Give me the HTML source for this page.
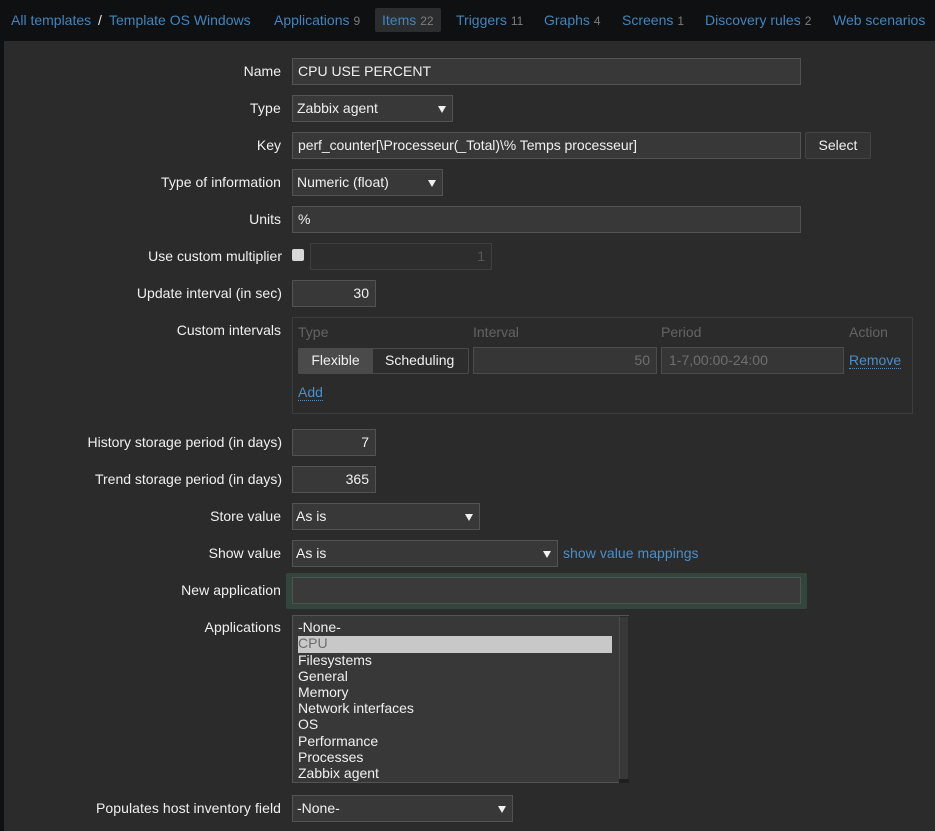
<!DOCTYPE html>
<html><head><meta charset="utf-8">
<style>
html,body{margin:0;padding:0;background:#0e1012;}
body{width:935px;height:831px;overflow:hidden;position:relative;font:14px/16px "Liberation Sans",Arial,sans-serif;color:#f0f0f0;}
.t{position:absolute;white-space:nowrap;}
.l{position:absolute;right:654px;white-space:nowrap;color:#f0f0f0;}
.x{right:653px;}
a{color:#4a8fca;text-decoration:none;}
.n{position:absolute;top:12px;white-space:nowrap;color:#4285bd;}
.n i{font-style:normal;font-size:12px;color:#7d7d7d;margin-left:4px;}
.b{position:absolute;box-sizing:border-box;background:#383838;border:1px solid #535353;height:27px;line-height:25px;white-space:nowrap;}
.s{padding-left:4px;}
.s:after{content:"";position:absolute;right:6px;top:10px;border-left:4px solid transparent;border-right:4px solid transparent;border-top:7px solid #f0f0f0;}
.i{padding-left:5px;}
.r{text-align:right;padding-right:6px;}
.d{color:#6f6f6f;}
.h{position:absolute;top:324px;color:#646464;}
.u{border-bottom:1px dotted #4a8fca;line-height:15px;color:#4a8fca;position:absolute;white-space:nowrap;}
.o{position:absolute;left:6px;line-height:16px;white-space:nowrap;}
</style></head><body>
<div style="position:absolute;left:4px;top:41px;width:931px;height:790px;background:#2b2b2b"></div>

<span class="n" style="left:11px">All templates</span>
<span class="t" style="left:98px;top:12px;color:#e8e8e8">/</span>
<span class="n" style="left:109px">Template OS Windows</span>
<span class="n" style="left:274px">Applications<i>9</i></span>
<div style="position:absolute;left:375px;top:8px;width:66px;height:24px;background:#2b2d2e;border-radius:2px"></div>
<span class="n" style="left:382px">Items<i>22</i></span>
<span class="n" style="left:456px">Triggers<i>11</i></span>
<span class="n" style="left:544px">Graphs<i>4</i></span>
<span class="n" style="left:622px">Screens<i>1</i></span>
<span class="n" style="left:705px">Discovery rules<i>2</i></span>
<span class="n" style="left:833px">Web scenarios</span>

<span class="l" style="top:63px">Name</span>
<div class="b i" style="left:292px;top:58px;width:509px">CPU USE PERCENT</div>

<span class="l" style="top:100px;letter-spacing:.2px">Type</span>
<div class="b s" style="left:292px;top:95px;width:161px">Zabbix agent</div>

<span class="l" style="top:137px">Key</span>
<div class="b i" style="left:292px;top:132px;width:509px;letter-spacing:-.06px">perf_counter[\Processeur(_Total)\% Temps processeur]</div>
<div class="b" style="left:805px;top:132px;width:66px;text-align:center;border-radius:2px;background:#333;border-color:#444">Select</div>

<span class="l" style="top:174px;letter-spacing:.05px">Type of information</span>
<div class="b s" style="left:292px;top:169px;width:151px">Numeric (float)</div>

<span class="l" style="top:211px">Units</span>
<div class="b i" style="left:292px;top:206px;width:509px">%</div>

<span class="l x" style="top:248px">Use custom multiplier</span>
<div style="position:absolute;left:292px;top:249px;width:12px;height:12px;background:#d8d8d8;border-radius:2px"></div>
<div class="b r d" style="left:310px;top:243px;width:182px;background:#2d2d2d;border-color:#3f3f3f;color:#555">1</div>

<span class="l x" style="top:285px;letter-spacing:.05px">Update interval (in sec)</span>
<div class="b r" style="left:292px;top:280px;width:84px">30</div>

<span class="l" style="top:322px">Custom intervals</span>
<div style="position:absolute;box-sizing:border-box;left:292px;top:317px;width:621px;height:97px;border:1px solid #3d3d3d"></div>
<span class="h" style="left:298px">Type</span>
<span class="h" style="left:473px">Interval</span>
<span class="h" style="left:661px">Period</span>
<span class="h" style="left:849px">Action</span>
<div class="b" style="left:298px;top:348px;width:171px;height:26px;background:#2d2d2d;border-color:#4a4a4a;line-height:24px;border-radius:2px">
  <span style="position:absolute;left:-1px;top:-1px;width:75px;height:26px;background:#4a4a4a;text-align:center;border-radius:2px 0 0 2px">Flexible</span>
  <span style="position:absolute;left:86px;top:-1px">Scheduling</span>
</div>
<div class="b r d" style="left:473px;top:347px;width:184px;background:#363636;border-color:#4c4c4c">50</div>
<div class="b i d" style="left:661px;top:347px;width:183px;background:#363636;border-color:#4c4c4c;padding-left:7px">1-7,00:00-24:00</div>
<span class="u" style="left:849px;top:353px">Remove</span>
<span class="u" style="left:298px;top:385px">Add</span>

<span class="l x" style="top:434px">History storage period (in days)</span>
<div class="b r" style="left:292px;top:429px;width:84px">7</div>

<span class="l x" style="top:471px">Trend storage period (in days)</span>
<div class="b r" style="left:292px;top:466px;width:84px">365</div>

<span class="l" style="top:508px">Store value</span>
<div class="b s" style="left:292px;top:503px;width:188px;padding-left:3px">As is</div>

<span class="l" style="top:545px">Show value</span>
<div class="b s" style="left:292px;top:540px;width:266px;padding-left:3px">As is</div>
<span class="t" style="left:563px;top:545px;color:#4a8fca;letter-spacing:.05px">show value mappings</span>

<span class="l" style="top:582px;letter-spacing:.07px">New application</span>
<div style="position:absolute;left:286px;top:573px;width:521px;height:36px;background:#33453c;border-radius:2px"></div>
<div class="b" style="left:292px;top:577px;width:509px;background:#3a3a3a;border-color:#4a564f"></div>

<span class="l" style="top:619px;letter-spacing:.08px">Applications</span>
<div class="b" style="left:292px;top:615px;width:337px;height:168px;line-height:16px;background:none;border:0">
  <div style="position:absolute;left:0;top:0;width:328px;height:168px;background:#383838"></div>
  <div style="position:absolute;left:0;top:0;width:337px;height:1px;background:#535353"></div>
  <div style="position:absolute;left:0;top:0;width:1px;height:168px;background:#535353"></div>
  <div style="position:absolute;left:0;top:167px;width:327px;height:1px;background:#535353"></div>
  <div style="position:absolute;left:327px;top:2px;width:1px;height:166px;background:#4a4a4a"></div>
  <div style="position:absolute;left:328px;top:2px;width:8px;height:166px;background:#383838"></div>
  <div style="position:absolute;left:327px;top:164px;width:10px;height:4px;background:#1f1f1f"></div>
  <div style="position:absolute;left:6px;top:21px;width:314px;height:17px;background:#c8c8c8"></div>
  <div class="o" style="top:4px">-None-</div>
  <div class="o" style="top:20px;color:#6d6d6d">CPU</div>
  <div class="o" style="top:37px">Filesystems</div>
  <div class="o" style="top:53px">General</div>
  <div class="o" style="top:69px">Memory</div>
  <div class="o" style="top:85px">Network interfaces</div>
  <div class="o" style="top:101px">OS</div>
  <div class="o" style="top:118px">Performance</div>
  <div class="o" style="top:134px">Processes</div>
  <div class="o" style="top:150px">Zabbix agent</div>
</div>

<span class="l" style="top:800px;letter-spacing:.07px">Populates host inventory field</span>
<div class="b s" style="left:292px;top:795px;width:221px">-None-</div>
</body></html>
